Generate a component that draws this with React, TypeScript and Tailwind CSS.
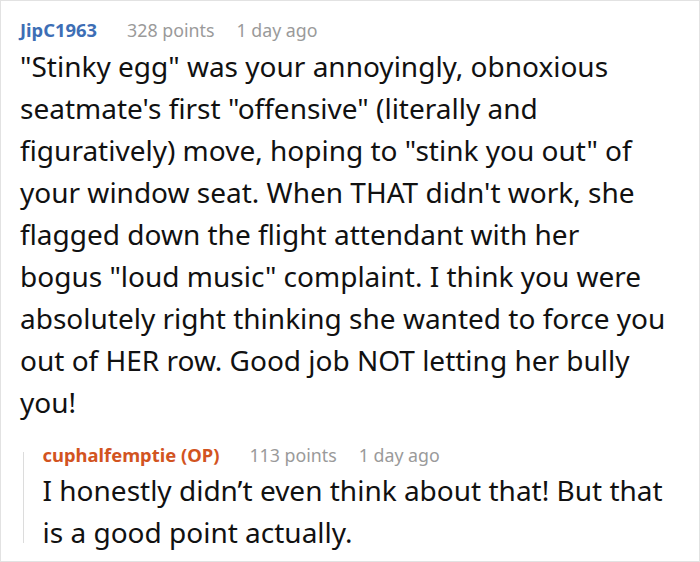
export default function App() {
  return (
    <div className="w-[700px] h-[562px] bg-white border border-[#e2e2e2] font-['Noto_Sans',sans-serif] overflow-hidden">
      <div className="pl-[19px] pr-[18px] pt-[17px]">
        <div className="flex items-baseline leading-[24px]">
          <span className="text-[18.4px] font-bold text-[#3d6eb5]">JipC1963</span>
          <span className="ml-[30px] text-[17.8px] text-[#9a9a9a]">328 points</span>
          <span className="ml-[22px] text-[17.8px] text-[#9a9a9a]">1 day ago</span>
        </div>
        <p className="mt-[3px] text-[28px] leading-[42px] text-[#111111]">
          "Stinky egg" was your annoyingly, obnoxious seatmate's first "offensive" (literally and figuratively) move, hoping to "stink you out" of your window seat. When THAT didn't work, she flagged down the flight attendant with her bogus{"\u00a0"}"loud music" complaint. I think you were absolutely right thinking she wanted to force you out of HER row. Good job NOT letting her bully you!
        </p>
        <div className="mt-[20px] flex">
          <div className="w-[1.5px] bg-[#dcdcdc] ml-[3px] mt-[9px] mb-[10px]" />
          <div className="pl-[18.5px]">
            <div className="flex items-baseline leading-[24px]">
              <span className="text-[18.4px] font-bold text-[#d2541f]">cuphalfemptie (OP)</span>
              <span className="ml-[30px] text-[17.8px] text-[#9a9a9a]">113 points</span>
              <span className="ml-[22px] text-[17.8px] text-[#9a9a9a]">1 day ago</span>
            </div>
            <p className="mt-[2px] text-[28px] leading-[42px] text-[#111111]">
              I honestly didn’t even think about that! But that is a good point actually.
            </p>
          </div>
        </div>
      </div>
    </div>
  );
}
